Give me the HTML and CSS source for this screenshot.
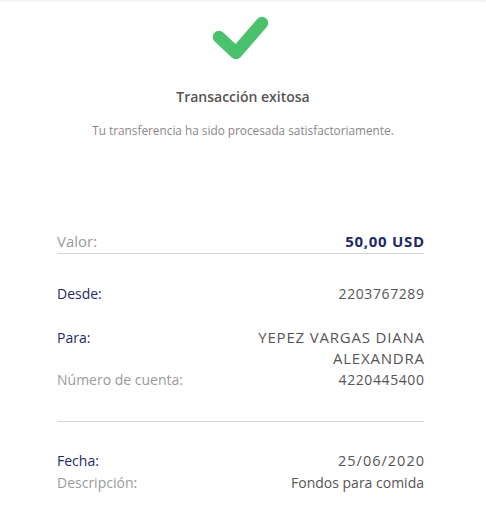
FILE: index.html
```html
<!DOCTYPE html>
<html lang="es">
<head>
<meta charset="utf-8">
<link rel="stylesheet" href="styles.css">
</head>
<body>
<div class="page">
  <header class="hero">
    <svg class="check" width="60" height="48" viewBox="0 0 60 48">
      <polyline points="7,25 24,41 50,11" fill="none" stroke="#4ac26d" stroke-width="12.5" stroke-linecap="round" stroke-linejoin="round"/>
    </svg>
    <h1 class="title">Transacción exitosa</h1>
    <p class="subtitle">Tu transferencia ha sido procesada satisfactoriamente.</p>
  </header>
  <section class="details">
    <div class="row amount">
      <span class="label muted">Valor:</span>
      <span class="value strong">50,00 USD</span>
    </div>
    <div class="group">
      <div class="row">
        <span class="label navy">Desde:</span>
        <span class="value num">2203767289</span>
      </div>
    </div>
    <div class="group">
      <div class="row">
        <span class="label navy">Para:</span>
        <span class="value caps">YEPEZ VARGAS DIANA<br>ALEXANDRA</span>
      </div>
      <div class="row">
        <span class="label muted">Número de cuenta:</span>
        <span class="value num">4220445400</span>
      </div>
    </div>
    <div class="group last">
      <div class="row">
        <span class="label navy">Fecha:</span>
        <span class="value date">25/06/2020</span>
      </div>
      <div class="row">
        <span class="label muted">Descripción:</span>
        <span class="value">Fondos para comida</span>
      </div>
    </div>
  </section>
</div>
</body>
</html>
```

FILE: styles.css
```css
html, body {
  margin: 0;
  padding: 0;
  background: #fff;
}
body {
  font-family: "Open Sans", "Liberation Sans", sans-serif;
  color: #555;
}
.page {
  width: 486px;
  height: 505px;
  box-shadow: inset 0 3px 3px -2px rgba(0,0,0,0.08);
  overflow: hidden;
}
.hero {
  display: flex;
  flex-direction: column;
  align-items: center;
  padding-top: 12px;
}
.check {
  display: block;
  margin-left: -2px;
}
.title {
  margin: 28px 0 0;
  font-size: 14px;
  font-weight: 600;
  line-height: 18px;
  color: #555;
}
.subtitle {
  margin: 17px 0 0;
  font-size: 11.8px;
  line-height: 15px;
  color: #888;
}
.details {
  margin: 92px 62px 0 57px;
  font-size: 14px;
  line-height: 21px;
}
.row {
  display: flex;
  justify-content: space-between;
  align-items: flex-start;
}
.value {
  text-align: right;
}
.num { letter-spacing: 0.6px; margin-right: -0.6px; }
.date { font-size: 14.5px; letter-spacing: 1px; margin-right: -1px; }
.caps { font-size: 15px; letter-spacing: 0.8px; margin-right: -0.8px; }
.amount {
  font-size: 15px;
  line-height: 22px;
  padding-bottom: 1px;
  border-bottom: 1px solid #d6d6d6;
}
.muted { color: #9a9a9a; }
.navy { color: #1e2a68; }
.strong { color: #1e2a68; font-weight: 700; letter-spacing: 0.7px; margin-right: -0.7px; }
.group {
  padding-top: 29px;
}
.group + .group {
  padding-top: 23px;
}
.group:nth-of-type(3) {
  padding-bottom: 31px;
  border-bottom: 1px solid #d6d6d6;
}
.group.last {
  padding-top: 28px;
}
.group.last .row + .row {
  margin-top: 1px;
}
```
